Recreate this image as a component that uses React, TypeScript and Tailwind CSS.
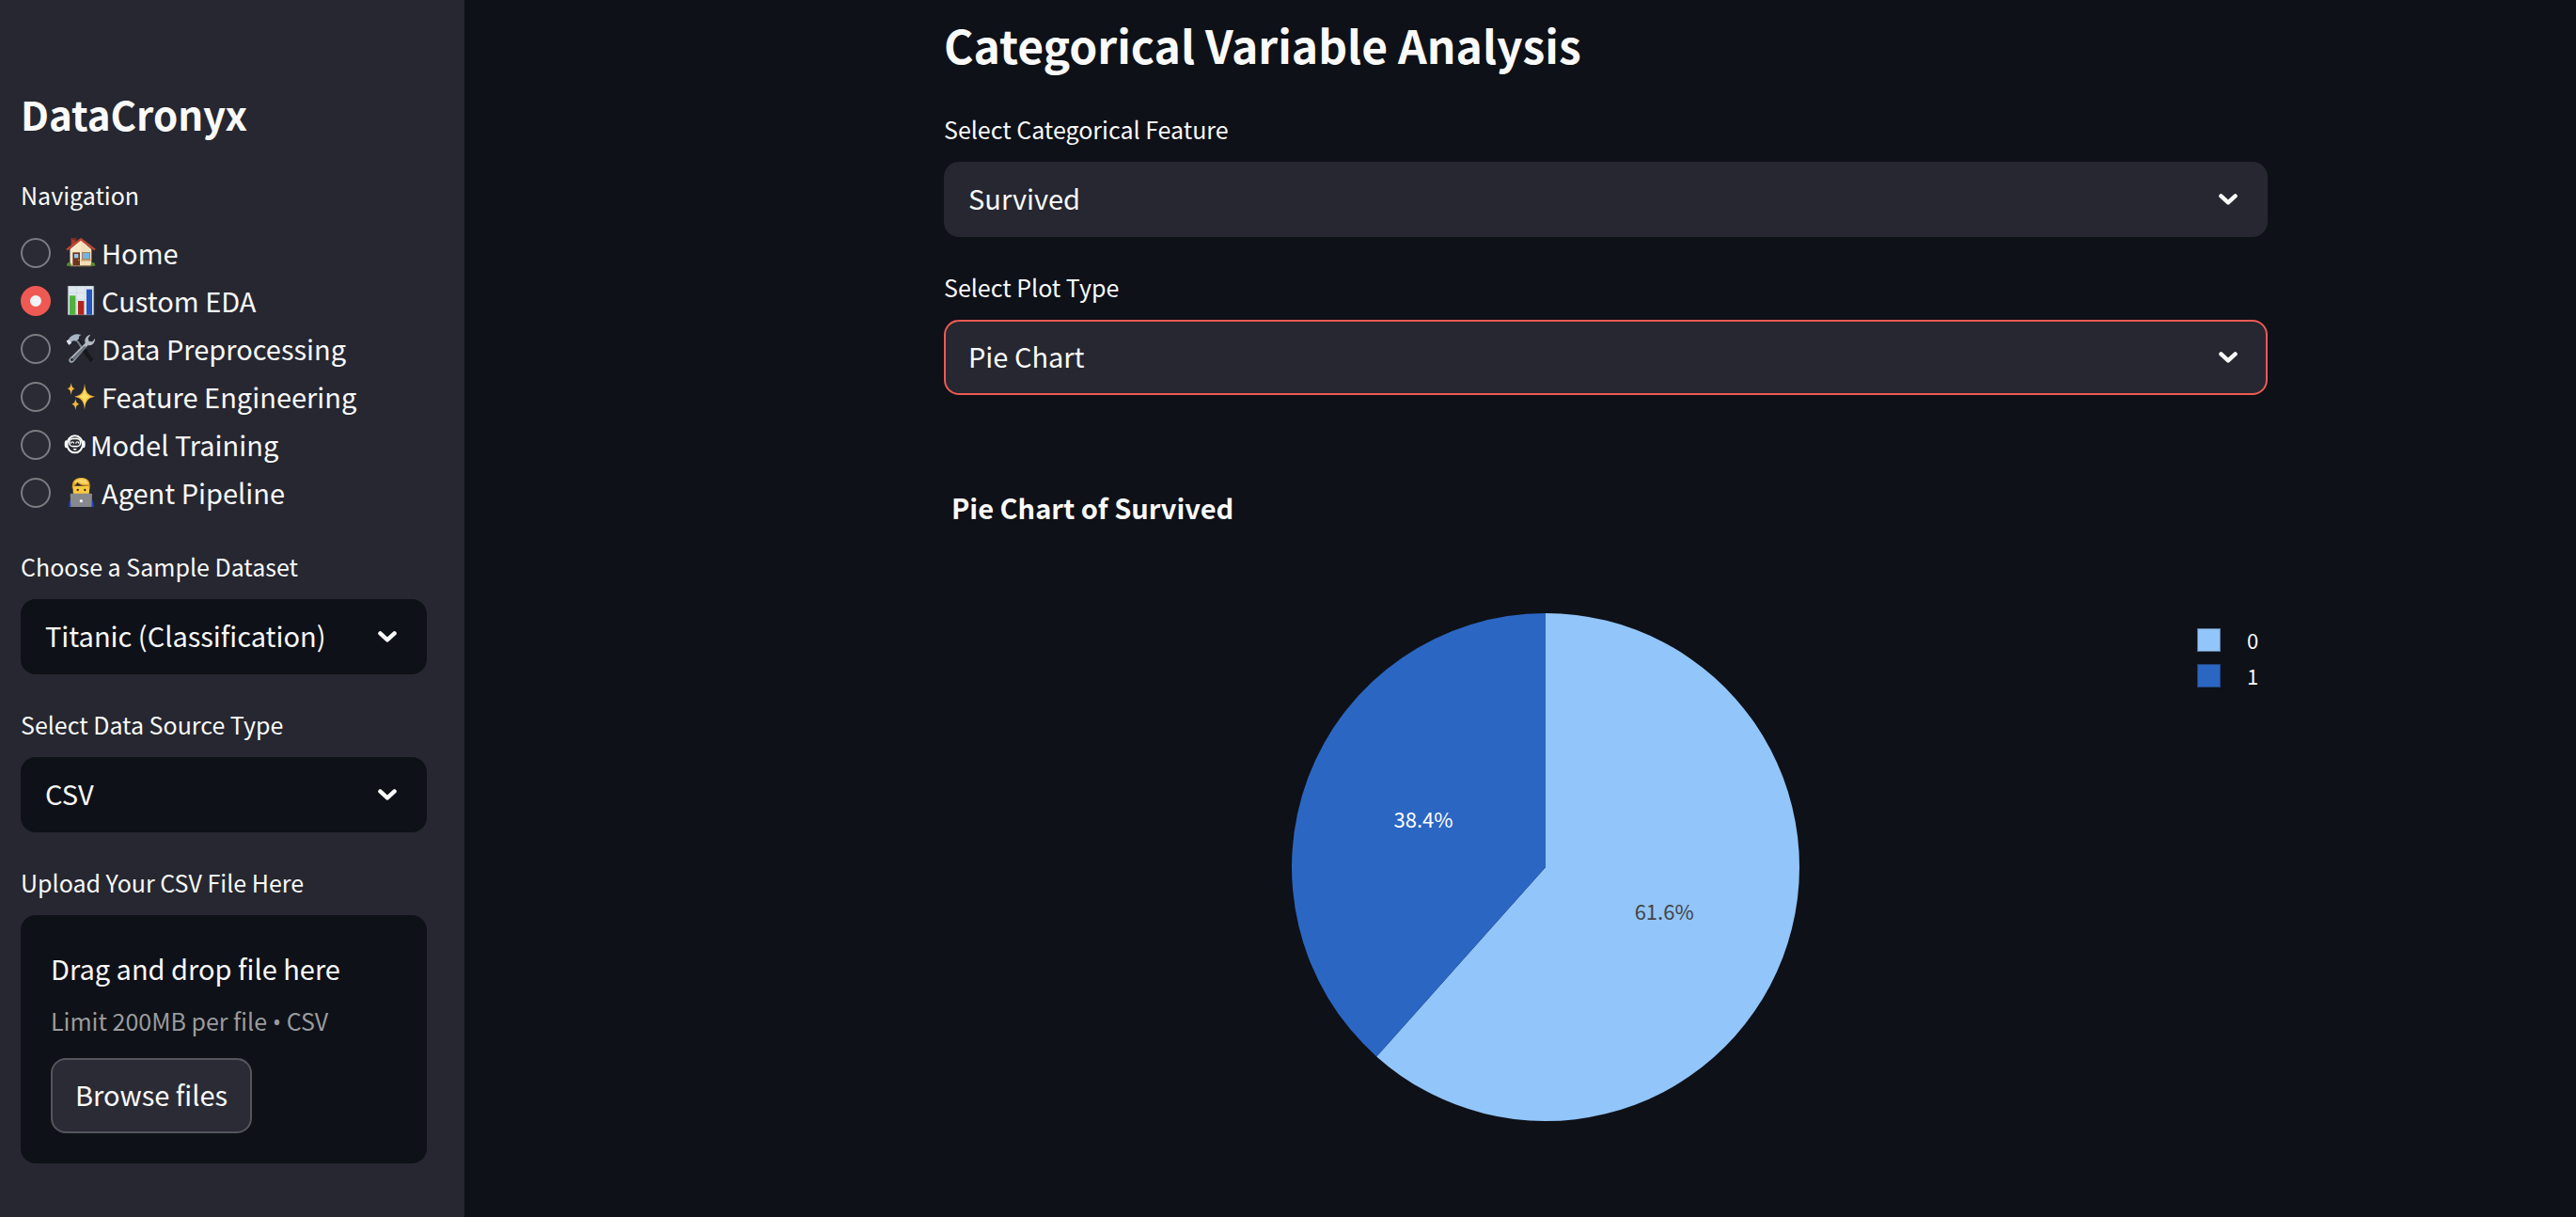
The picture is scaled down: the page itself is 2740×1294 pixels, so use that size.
import { useState, type ReactNode } from 'react';

const HouseIcon = () => (
  <svg viewBox="0 0 96 96" className="size-8 shrink-0" aria-hidden="true">
    <path d="M17 28V1h15v16z" fill="#a33b2e" />
    <path d="M15 0h19v6H15z" fill="#7c2d26" />
    <path d="M14 36 48 7l34 29v53H14z" fill="#f3dfb8" />
    <path d="M14 36 48 7v82H14z" fill="#f8e8c8" />
    <path d="M3 38 48 4l45 34" fill="none" stroke="#c4473a" strokeWidth="7" />
    <path d="M22 46h23v43H22z" fill="#6e3523" />
    <path d="M27 51h13v13H27z" fill="#8fc7ec" />
    <circle cx="41" cy="71" r="2" fill="#e2b24c" />
    <path d="M51 45h27v24H51z" fill="#a8835c" />
    <path d="M54 48h21v18H54z" fill="#72b4e4" />
    <path d="M48 69h33v5H48z" fill="#c9a77b" />
    <path d="M14 87h68v4H14z" fill="#9a7b58" />
    <path d="M3 89c0-8 4-12 9-11 4 1 6 5 6 11zM79 89c0-8 4-12 9-11 4 1 6 5 6 11z" fill="#5c8a34" />
  </svg>
);

const ChartIcon = () => (
  <svg viewBox="0 0 96 96" className="size-8 shrink-0" aria-hidden="true">
    <path d="M7 0h82v92H7z" fill="#dfe7ef" stroke="#9fa9b5" strokeWidth="2" />
    <path d="M8 22h80M8 45h80M8 68h80M34 1v90M62 1v90" stroke="#c5d0dc" strokeWidth="1.5" />
    <path d="M12 31h19v61H12z" fill="#4fb23c" />
    <path d="M39 48h19v44H39z" fill="#b0261c" />
    <path d="M66 11h18v81H66z" fill="#2456bd" />
  </svg>
);

const ToolsIcon = () => (
  <svg viewBox="0 0 96 96" className="size-8 shrink-0" aria-hidden="true">
    <path d="M30 24 42 16 88 82l-9 9z" fill="#17181c" />
    <path d="m33 24 6-4 14 20-6 5z" fill="#6f7782" />
    <path d="M2 23 9 18c4-9 14-16 27-17l15 2c-8 2-10 6-9 12l-9 9c-6-4-9-2-14 0l-1 5-8 6z" fill="#a9b5c2" />
    <path d="m9 18 9 11-8 6-8-12z" fill="#dbe3ea" />
    <path d="M62 29c-4-12 3-24 17-27l-8 12 3 10 11 1 8-11c1 15-10 25-22 22L27 87c-5 6-11 7-15 3-4-5-2-10 3-14z" fill="#b3bac2" />
    <path d="m60 38 6 5-42 44-7 2-4-5z" fill="#69717c" />
    <circle cx="19" cy="82" r="4" fill="#262730" />
  </svg>
);

const SparklesIcon = () => (
  <svg viewBox="0 0 96 96" className="size-8 shrink-0" aria-hidden="true">
    <g fill="#f2b93b">
      <path d="M60 5c3 28 9 37 33 42-24 5-30 14-33 42-3-28-9-37-33-42 24-5 30-14 33-42z" />
      <path d="M17 3c2 12 4 17 13 19-9 2-11 7-13 20-2-13-4-18-13-20 9-2 11-7 13-19z" />
      <path d="M31 54c2 11 4 15 13 17-9 2-11 6-13 19-2-13-4-17-13-19 9-2 11-6 13-17z" />
    </g>
    <path d="M60 20c3 18 6 24 20 27-14 3-17 9-20 26-3-17-6-23-20-26 14-3 17-9 20-27z" fill="#ffe168" />
  </svg>
);

const FaceIcon = () => (
  <svg viewBox="0 0 60 96" className="h-8 w-5 shrink-0 overflow-visible" aria-hidden="true">
    <ellipse cx="29" cy="46" rx="25" ry="27" fill="none" stroke="#fafafa" strokeWidth="6" />
    <ellipse cx="1" cy="46" rx="5" ry="12" fill="#fafafa" />
    <ellipse cx="57" cy="46" rx="5" ry="12" fill="#fafafa" />
    <rect x="11" y="28" width="36" height="25" rx="12" fill="none" stroke="#fafafa" strokeWidth="5" />
    <path d="M16 44c1-7 9-7 10 0M32 44c1-7 9-7 10 0" fill="none" stroke="#fafafa" strokeWidth="4" />
    <path d="M23 60h12c-1 7-11 7-12 0z" fill="#fafafa" />
  </svg>
);

const AgentIcon = () => (
  <svg viewBox="0 0 96 96" className="size-8 shrink-0" aria-hidden="true">
    <path d="M9 93c0-20 8-32 22-34h36c14 2 22 14 22 34z" fill="#2440c8" />
    <path d="M23 26h52v16c0 16-12 26-26 26S23 58 23 42z" fill="#f9c93f" />
    <path d="M21 38C17 12 28 0 50 0c20 0 31 12 26 38l-4-12C56 27 44 23 36 15c-2 8-7 11-11 12z" fill="#dfa226" />
    <path d="M26 17C31 6 41 2 52 3c12 1 19 7 21 17-16 2-27-1-35-9-3 5-7 7-12 6z" fill="#fad565" />
    <circle cx="38" cy="39" r="3.5" fill="#3c2a15" />
    <circle cx="61" cy="39" r="3.5" fill="#3c2a15" />
    <path d="M14 54c0-3 1-4 4-4h62c3 0 4 1 4 4l-2 39H16z" fill="#88898d" />
    <circle cx="49" cy="74" r="5" fill="#f1f1f3" />
  </svg>
);

const pages: { name: string; icon: ReactNode }[] = [
  { name: 'Home', icon: <HouseIcon /> },
  { name: 'Custom EDA', icon: <ChartIcon /> },
  { name: 'Data Preprocessing', icon: <ToolsIcon /> },
  { name: 'Feature Engineering', icon: <SparklesIcon /> },
  { name: 'Model Training', icon: <FaceIcon /> },
  { name: 'Agent Pipeline', icon: <AgentIcon /> },
];

type SelectFieldProps = {
  id: string;
  label: string;
  options: string[];
  look: string;
};

function SelectField({ id, label, options, look }: SelectFieldProps) {
  return (
    <div>
      <label htmlFor={id} className="block text-[25px] leading-10">
        {label}
      </label>
      <div className="relative mt-[15px]">
        <select
          id={id}
          className={`block h-20 w-full appearance-none rounded-2xl border-2 pr-16 pb-0.5 pl-6 text-[29px] outline-none ${look}`}
        >
          {options.map((o) => (
            <option key={o}>{o}</option>
          ))}
        </select>
        <svg
          viewBox="0 0 20 12"
          className="pointer-events-none absolute top-[34px] right-8 h-3 w-5"
          fill="none"
          stroke="currentColor"
          strokeWidth="4.4"
          strokeLinecap="round"
          strokeLinejoin="round"
          aria-hidden="true"
        >
          <path d="M2.4 2.4 10 9.4 17.6 2.4" />
        </svg>
      </div>
    </div>
  );
}

function Sidebar() {
  const [page, setPage] = useState('Custom EDA');
  return (
    <aside className="w-[494px] shrink-0 bg-[#262730] pt-[93px] pr-10 pl-[22px]">
      <h1 className="text-[42px] leading-14 font-bold">DataCronyx</h1>
      <fieldset className="mt-[38px]">
        <legend className="text-[25px] leading-10">Navigation</legend>
        <div className="mt-4">
          {pages.map(({ name, icon }) => (
            <label key={name} className="flex h-[51px] items-center">
              <input
                type="radio"
                name="page"
                checked={page === name}
                onChange={() => setPage(name)}
                className="mr-4 size-8 shrink-0 appearance-none rounded-full border-2 border-[#7c7c82] bg-[#2b2b35] checked:border-10 checked:border-[#ee5a53] checked:bg-[#f0f2f6]"
              />
              {icon}
              <span className="ml-1.5 pb-0.5 text-[29px] leading-10">{name}</span>
            </label>
          ))}
        </div>
      </fieldset>
      <div className="mt-[33px] flex flex-col gap-[33px]">
        <SelectField
          id="dataset"
          label="Choose a Sample Dataset"
          options={['Titanic (Classification)']}
          look="border-[#0e1117] bg-[#0e1117]"
        />
        <SelectField
          id="source"
          label="Select Data Source Type"
          options={['CSV']}
          look="border-[#0e1117] bg-[#0e1117]"
        />
        <div>
          <label htmlFor="upload" className="block text-[25px] leading-10">
            Upload Your CSV File Here
          </label>
          <div className="mt-[15px] rounded-2xl bg-[#0e1117] p-8">
            <p className="text-[29px] leading-12">Drag and drop file here</p>
            <p className="mt-3 text-[25px] leading-10 text-[#9a9b9e]">
              Limit 200MB per file <span className="font-['Open_Sans'] leading-none">•</span> CSV
            </p>
            <input id="upload" type="file" accept=".csv" className="hidden" />
            <button
              type="button"
              onClick={() => document.getElementById('upload')?.click()}
              className="mt-5 h-20 rounded-2xl border-2 border-[#55555e] bg-[#2b2b36] px-6 pb-0.5 text-[29px]"
            >
              Browse files
            </button>
          </div>
        </div>
      </div>
    </aside>
  );
}

const slices = [
  { label: '0', share: 61.6, at: 0.5, fill: '#92c5f9', text: '#444444', swatch: 'bg-[#92c5f9] border-[#5b7a9a]' },
  { label: '1', share: 38.4, at: 0.515, fill: '#2b66c3', text: '#ffffff', swatch: 'bg-[#2b66c3] border-[#1f437b]' },
];

function PieChart() {
  const r = 270;
  const point = (pct: number, radius: number) => {
    const a = (pct / 100) * 2 * Math.PI;
    return [r + radius * Math.sin(a), r - radius * Math.cos(a)];
  };
  let start = 0;
  return (
    <svg viewBox="0 0 540 540" className="w-full max-w-[540px]" role="img" aria-label="Pie Chart of Survived">
      {slices.map((s) => {
        const [x1, y1] = point(start, r);
        const [x2, y2] = point(start + s.share, r);
        const [tx, ty] = point(start + s.share / 2, r * s.at);
        start += s.share;
        return (
          <g key={s.label}>
            <path
              d={`M${r} ${r}L${x1} ${y1}A${r} ${r} 0 ${s.share > 50 ? 1 : 0} 1 ${x2} ${y2}Z`}
              fill={s.fill}
            />
            <text x={tx} y={ty + 8} textAnchor="middle" fontSize="22" fill={s.text}>
              {s.share}%
            </text>
          </g>
        );
      })}
    </svg>
  );
}

export default function App() {
  return (
    <div className="flex min-h-screen bg-[#0e1117] font-['Noto_Sans_CJK_SC',sans-serif] text-[#fafafa]">
      <Sidebar />
      <main className="flex min-w-0 flex-1 justify-center pt-[15px] pl-[182px]">
        <div className="w-full max-w-[1408px]">
          <h2 className="text-[48px] leading-16 font-bold">Categorical Variable Analysis</h2>
          <div className="mt-[38px] flex flex-col gap-[33px]">
            <SelectField
              id="feature"
              label="Select Categorical Feature"
              options={['Survived']}
              look="border-[#262730] bg-[#262730]"
            />
            <SelectField
              id="plot"
              label="Select Plot Type"
              options={['Pie Chart']}
              look="border-[#ee5a53] bg-[#262730]"
            />
          </div>
          <section className="mt-[95px]">
            <h3 className="pl-2 text-[29px] leading-12 font-bold">Pie Chart of Survived</h3>
            <div className="mt-[89px] flex">
              <div className="flex flex-1 justify-center">
                <PieChart />
              </div>
              <ul className="w-32 shrink-0 pt-[9px] pl-[53px]">
                {slices.map((s) => (
                  <li key={s.label} className="flex h-[38px] items-center gap-7 text-[22px] leading-8">
                    <span className={`size-[25px] border ${s.swatch}`} />
                    {s.label}
                  </li>
                ))}
              </ul>
            </div>
          </section>
        </div>
      </main>
    </div>
  );
}
